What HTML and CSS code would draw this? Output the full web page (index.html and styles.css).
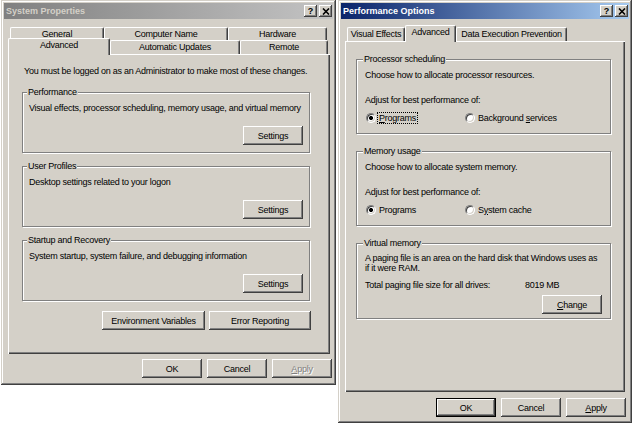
FILE: index.html
```html
<!DOCTYPE html>
<html lang="en">
<head>
    <meta charset="UTF-8">
    <title>System Properties</title>
    <link rel="stylesheet" href="styles.css">
</head>
<body>
<div class="desktop">
    <!-- System Properties (inactive) -->
    <div class="window sysprops">
        <div class="titlebar inactive">
            <span class="title">System Properties</span>
            <div class="title-buttons">
                <span class="tbtn">?</span>
                <span class="tbtn">
                    <svg width="8" height="7" viewBox="0 0 8 7"><path d="M1 0.5L7 6.5M7 0.5L1 6.5" stroke="#000" stroke-width="1.6"/></svg>
                </span>
            </div>
        </div>

        <div class="tabs">
            <div class="tab-row back">
                <div class="tab t-general">General</div>
                <div class="tab t-computer">Computer Name</div>
                <div class="tab t-hardware">Hardware</div>
            </div>
            <div class="tab-row front">
                <div class="tab selected t-advanced">Advanced</div>
                <div class="tab t-updates">Automatic Updates</div>
                <div class="tab t-remote">Remote</div>
            </div>
        </div>

        <div class="panel sys-panel">
            <p class="intro">You must be logged on as an Administrator to make most of these changes.</p>

            <fieldset class="group sys-group">
                <legend>Performance</legend>
                <p>Visual effects, processor scheduling, memory usage, and virtual memory</p>
                <div class="group-actions"><button class="btn">Settings</button></div>
            </fieldset>

            <fieldset class="group sys-group">
                <legend>User Profiles</legend>
                <p>Desktop settings related to your logon</p>
                <div class="group-actions"><button class="btn">Settings</button></div>
            </fieldset>

            <fieldset class="group sys-group">
                <legend>Startup and Recovery</legend>
                <p>System startup, system failure, and debugging information</p>
                <div class="group-actions"><button class="btn">Settings</button></div>
            </fieldset>

            <div class="extra-buttons">
                <button class="btn wide-env">Environment Variables</button>
                <button class="btn wide-err">Error Reporting</button>
            </div>
        </div>

        <div class="dialog-buttons sys-buttons">
            <button class="btn">OK</button>
            <button class="btn">Cancel</button>
            <button class="btn" disabled><u>A</u>pply</button>
        </div>
    </div>

    <!-- Performance Options (active) -->
    <div class="window perfopts">
        <div class="titlebar active">
            <span class="title">Performance Options</span>
            <div class="title-buttons">
                <span class="tbtn">?</span>
                <span class="tbtn">
                    <svg width="8" height="7" viewBox="0 0 8 7"><path d="M1 0.5L7 6.5M7 0.5L1 6.5" stroke="#000" stroke-width="1.6"/></svg>
                </span>
            </div>
        </div>

        <div class="tabs">
            <div class="tab-row front perf-tabs">
                <div class="tab t-visual">Visual Effects</div>
                <div class="tab selected t-padv">Advanced</div>
                <div class="tab t-dep">Data Execution Prevention</div>
            </div>
        </div>

        <div class="panel perf-panel">
            <fieldset class="group perf-group">
                <legend>Processor scheduling</legend>
                <p>Choose how to allocate processor resources.</p>
                <p class="adjust">Adjust for best performance of:</p>
                <div class="choices">
                    <label class="radio"><span class="dot checked"></span><span class="focus"><u>P</u>rograms</span></label>
                    <label class="radio"><span class="dot"></span><span>Background <u>s</u>ervices</span></label>
                </div>
            </fieldset>

            <fieldset class="group perf-group">
                <legend>Memory usage</legend>
                <p>Choose how to allocate system memory.</p>
                <p class="adjust">Adjust for best performance of:</p>
                <div class="choices">
                    <label class="radio"><span class="dot checked"></span><span>Pro<u>g</u>rams</span></label>
                    <label class="radio"><span class="dot"></span><span>S<u>y</u>stem cache</span></label>
                </div>
            </fieldset>

            <fieldset class="group perf-group vm-group">
                <legend>Virtual memory</legend>
                <p class="vm-text">A paging file is an area on the hard disk that Windows uses as<br>if it were RAM.</p>
                <div class="total-row">
                    <span class="total-label">Total paging file size for all drives:</span>
                    <span>8019 MB</span>
                </div>
                <div class="group-actions vm-actions"><button class="btn"><u>C</u>hange</button></div>
            </fieldset>
        </div>

        <div class="dialog-buttons perf-buttons">
            <button class="btn default">OK</button>
            <button class="btn">Cancel</button>
            <button class="btn"><u>A</u>pply</button>
        </div>
    </div>
</div>
</body>
</html>
```

FILE: styles.css
```css
* {
    box-sizing: border-box;
}
body {
    margin: 0;
    background: #fff;
    font-family: "Liberation Sans", Arial, sans-serif;
    font-size: 9px;
    letter-spacing: -0.25px;
    color: #000;
}
p {
    margin: 0;
    line-height: 11px;
    white-space: nowrap;
}
.desktop {
    display: flex;
    align-items: flex-start;
    gap: 2px;
    padding-left: 1px;
}

/* window frame */
.window {
    display: flex;
    flex-direction: column;
    padding: 3px;
    background: #d4d0c8;
    box-shadow: inset -1px -1px #404040, inset 1px 1px #d4d0c8,
                inset -2px -2px #808080, inset 2px 2px #fff;
}
.sysprops {
    width: 335px;
    height: 385px;
}
.perfopts {
    width: 294px;
    height: 423px;
}
.titlebar {
    height: 16px;
    display: flex;
    align-items: center;
    justify-content: space-between;
    padding: 0 1px 0 2px;
    font-weight: bold;
    font-size: 9px;
    letter-spacing: 0;
}
.titlebar.inactive {
    background: linear-gradient(to right, #808080, #c4c4c4);
    color: #d4d0c8;
}
.titlebar.active {
    background: linear-gradient(to right, #0a246a, #a6caf0);
    color: #fff;
}
.title-buttons {
    display: flex;
    gap: 2px;
}
.tbtn {
    width: 13px;
    height: 12px;
    display: flex;
    align-items: center;
    justify-content: center;
    background: #d4d0c8;
    color: #000;
    font-size: 9px;
    font-weight: bold;
    box-shadow: inset -1px -1px #404040, inset 1px 1px #fff, inset -2px -2px #808080;
}

/* tabs */
.tabs {
    margin: 8px 3px 0 4px;
}
.tab-row {
    display: flex;
    height: 13px;
}
.tab-row.back {
    padding-left: 2px;
}
.tab-row.front {
    height: 14px;
}
.perf-tabs {
    padding-left: 2px;
}
.tab {
    background: #d4d0c8;
    border-top: 1px solid #fff;
    border-left: 1px solid #fff;
    border-right: 1px solid #404040;
    border-radius: 2px 2px 0 0;
    box-shadow: inset -1px 0 #808080;
    text-align: center;
    line-height: 12px;
    white-space: nowrap;
}
.tab.selected {
    position: relative;
    z-index: 1;
    margin: -2px 0 -1px;
    line-height: 13px;
}
.t-general { width: 94px; }
.t-computer { width: 124px; }
.t-hardware { width: 99px; }
.t-advanced { width: 102px; }
.t-updates { width: 130px; }
.t-remote { width: 88px; }
.t-visual { width: 58px; }
.t-padv { width: 51px; }
.t-dep { width: 111px; }

/* tab page */
.panel {
    flex: 1;
    box-shadow: inset 1px 1px #fff, inset -1px -1px #404040, inset -2px -2px #808080;
}
.sys-panel {
    margin: 0 3px 0 4px;
    padding: 12px 20px 0 14px;
}
.perf-panel {
    margin: 0 4px 0 4px;
    padding: 13px 14px 0 11px;
}
.intro {
    margin: 0 0 10px 2px;
}

/* group boxes */
.group {
    margin: 0;
    min-width: 0;
    border: 1px solid #808080;
    box-shadow: inset 1px 1px #fff, 1px 1px #fff;
}
.group legend {
    margin-left: -2px;
    padding: 0 1px;
    line-height: 11px;
    background: #d4d0c8;
}
.sys-group {
    padding: 5px 6px 7px 6px;
    margin-bottom: 8px;
}
.sys-group .group-actions {
    margin-top: 12px;
}
.perf-group {
    padding: 5px 8px 9px 8px;
    margin-bottom: 12px;
}
.group-actions {
    display: flex;
    justify-content: flex-end;
    margin-top: 14px;
}
.adjust {
    margin-top: 14px;
}
.choices {
    display: grid;
    grid-template-columns: 99px auto;
    margin-top: 6px;
    height: 12px;
}
.radio {
    display: flex;
    align-items: center;
    gap: 3px;
    padding-left: 1px;
}
.dot {
    width: 10px;
    height: 10px;
    border-radius: 50%;
    background: #fff;
    border: 1px solid;
    border-color: #808080 #fff #fff #808080;
    box-shadow: inset 1px 1px #404040, inset -1px -1px #d4d0c8;
}
.dot.checked {
    background: radial-gradient(circle, #000 0 1.8px, #fff 2.3px);
}
.focus {
    outline: 1px dotted #000;
    padding: 0 1px;
    margin-left: -1px;
}
.vm-group {
    padding-top: 4px;
    padding-bottom: 4px;
}
.vm-text {
    line-height: 10px;
}
.total-row {
    display: flex;
    margin-top: 7px;
    line-height: 11px;
}
.total-label {
    width: 160px;
}
.vm-actions {
    margin-top: 4px;
}

/* buttons */
.btn {
    width: 60px;
    height: 19px;
    padding: 0;
    border: 0;
    font: inherit;
    letter-spacing: inherit;
    color: #000;
    background: #d4d0c8;
    box-shadow: inset -1px -1px #404040, inset 1px 1px #fff,
                inset -2px -2px #808080, inset 2px 2px #d4d0c8;
}
.btn.default {
    border: 1px solid #000;
}
.btn:disabled {
    color: #808080;
    text-shadow: 1px 1px #fff;
}
.extra-buttons {
    display: flex;
    justify-content: flex-end;
    gap: 4px;
    margin-top: 10px;
    margin-right: -1px;
}
.wide-env { width: 103px; }
.wide-err { width: 102px; }
.dialog-buttons {
    display: flex;
    justify-content: flex-end;
    gap: 5px;
}
.sys-buttons {
    margin: 5px 1px 4px 0;
}
.perf-buttons {
    margin: 6px 3px 3px 0;
}
```
